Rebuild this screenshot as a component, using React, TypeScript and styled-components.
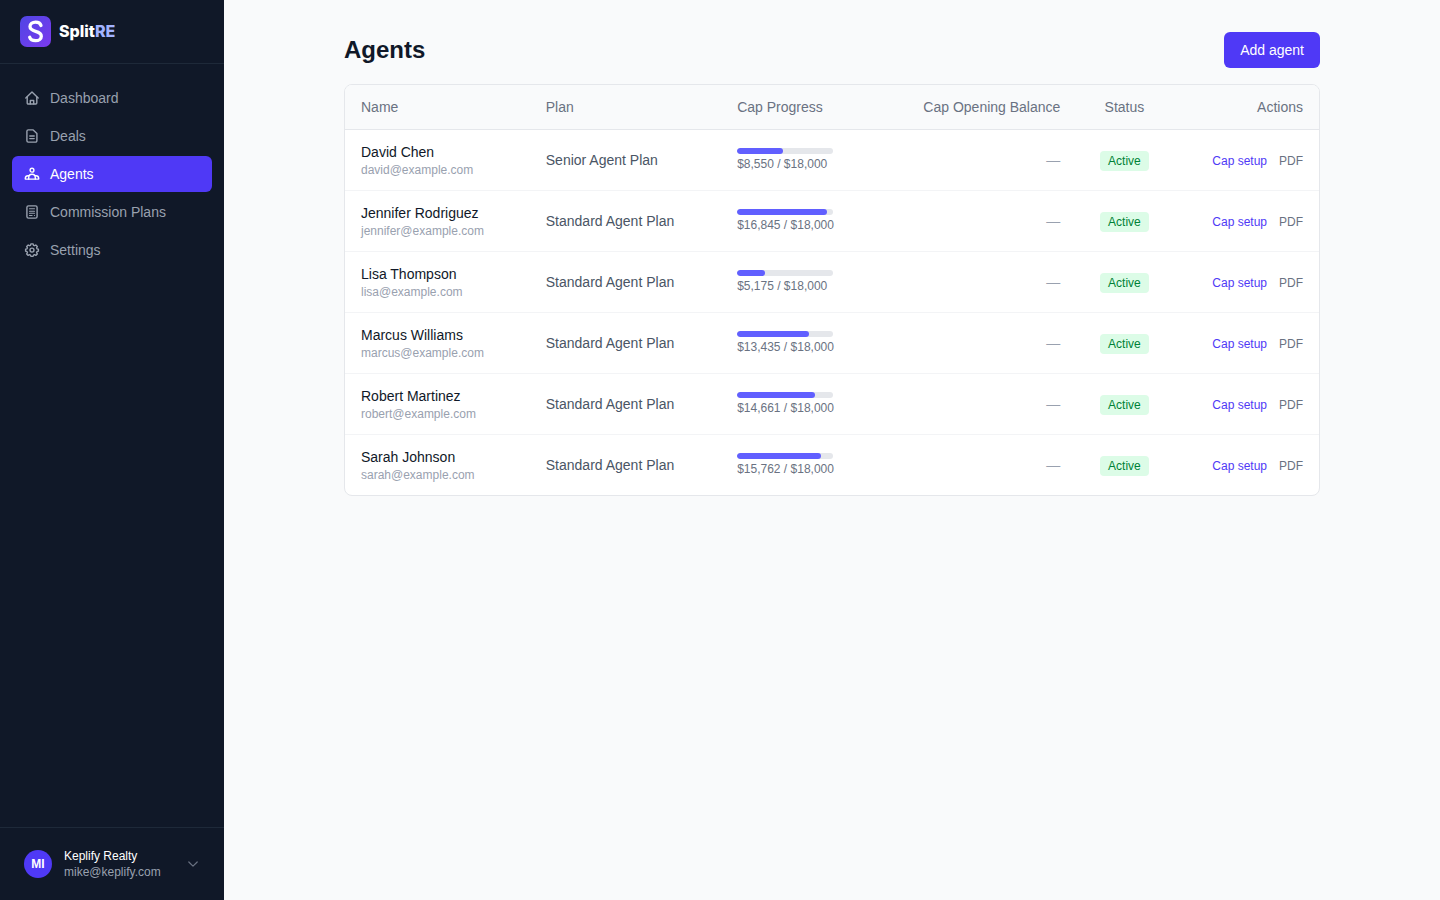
import React from 'react';
import styled, { createGlobalStyle } from 'styled-components';

const GlobalStyle = createGlobalStyle`
  *, *::before, *::after { box-sizing: border-box; }
  body {
    margin: 0;
    background: #f9fafb;
    color: #101828;
    font-family: "Liberation Sans", Arial, Helvetica, sans-serif;
    font-size: 14px;
    line-height: 20px;
  }
  button { font: inherit; border: 0; cursor: pointer; }
  a { text-decoration: none; }
`;

const Shell = styled.div`
  display: flex;
  min-height: 100vh;
`;

const Sidebar = styled.aside`
  display: flex;
  flex-direction: column;
  flex: none;
  width: 224px;
  background: #101828;
`;

const Brand = styled.a`
  display: flex;
  align-items: center;
  gap: 8px;
  padding: 16px 20px;
  border-bottom: 1px solid #1e2939;
  color: #ffffff;
`;

const Wordmark = styled.span`
  padding-bottom: 2px;
  font-family: Inter, sans-serif;
  font-size: 16px;
  font-weight: 800;
`;

const WordmarkAccent = styled.span`
  color: #a3b3ff;
`;

const Nav = styled.nav`
  display: flex;
  flex-direction: column;
  flex: 1;
  gap: 2px;
  padding: 16px 12px;
`;

const NavLink = styled.a<{ $active?: boolean }>`
  display: flex;
  align-items: center;
  gap: 10px;
  padding: 8px 12px;
  border-radius: 6px;
  background: ${(p) => (p.$active ? '#4f39f6' : 'transparent')};
  color: ${(p) => (p.$active ? '#ffffff' : '#99a1af')};
`;

const Icon = styled.svg<{ $weight?: number }>`
  flex: none;
  display: block;
  fill: none;
  stroke: currentColor;
  stroke-width: ${(p) => p.$weight ?? 1.4};
  stroke-linecap: round;
  stroke-linejoin: round;
`;

const AccountArea = styled.div`
  padding: 12px;
  border-top: 1px solid #1e2939;
`;

const AccountButton = styled.button`
  display: flex;
  align-items: center;
  gap: 12px;
  width: 100%;
  padding: 8px 12px;
  border-radius: 6px;
  background: transparent;
  color: #6a7282;
  text-align: left;
`;

const Avatar = styled.span`
  display: flex;
  align-items: center;
  justify-content: center;
  width: 28px;
  height: 28px;
  border-radius: 50%;
  background: #4f39f6;
  color: #ffffff;
  font-size: 12px;
  font-weight: 700;
  line-height: 16px;
`;

const AccountText = styled.span`
  display: flex;
  flex-direction: column;
  flex: 1;
  font-size: 12px;
  line-height: 16px;
`;

const AccountName = styled.span`
  color: #ffffff;
`;

const AccountEmail = styled.span`
  color: #99a1af;
`;

const Main = styled.main`
  flex: 1;
  min-width: 0;
`;

const Content = styled.div`
  max-width: 1024px;
  margin: 0 auto;
  padding: 32px 24px;
`;

const PageHeader = styled.header`
  display: flex;
  align-items: center;
  justify-content: space-between;
  margin-bottom: 16px;
`;

const Title = styled.h1`
  margin: 0;
  font-size: 24px;
  font-weight: 700;
  line-height: 32px;
`;

const PrimaryButton = styled.button`
  padding: 8px 16px;
  border-radius: 6px;
  background: #4f39f6;
  color: #ffffff;
`;

const Card = styled.section`
  overflow: hidden;
  border: 1px solid #e5e7eb;
  border-radius: 8px;
  background: #ffffff;
`;

const Table = styled.table`
  width: 100%;
  border-collapse: collapse;
`;

type Align = 'left' | 'center' | 'right';

const HeadCell = styled.th<{ $align?: Align }>`
  padding: 12px 16px;
  border-bottom: 1px solid #e5e7eb;
  background: #f9fafb;
  color: #6a7282;
  font-weight: 400;
  text-align: ${(p) => p.$align ?? 'left'};
`;

const Row = styled.tr`
  & + & { border-top: 1px solid #f3f4f6; }
`;

const Cell = styled.td<{ $align?: Align }>`
  padding: 12px 16px;
  color: #4a5565;
  text-align: ${(p) => p.$align ?? 'left'};
`;

const AgentName = styled.div`
  color: #101828;
`;

const AgentEmail = styled.div`
  color: #99a1af;
  font-size: 12px;
  line-height: 16px;
`;

const Track = styled.div`
  overflow: hidden;
  width: 96px;
  height: 6px;
  margin-bottom: 2px;
  border-radius: 3px;
  background: #e5e7eb;
`;

const Fill = styled.div`
  height: 100%;
  border-radius: 3px;
  background: #615fff;
`;

const CapText = styled.div`
  color: #6a7282;
  font-size: 12px;
  line-height: 16px;
`;

const Empty = styled.span`
  color: #99a1af;
`;

const Badge = styled.span`
  display: inline-block;
  padding: 2px 8px;
  border-radius: 4px;
  background: #dcfce7;
  color: #008236;
  font-size: 12px;
  line-height: 16px;
`;

const ActionCell = styled(Cell)`
  white-space: nowrap;
`;

const ActionLink = styled.a<{ $muted?: boolean }>`
  color: ${(p) => (p.$muted ? '#6a7282' : '#4f39f6')};
  font-size: 12px;
  line-height: 16px;

  & + & { margin-left: 12px; }
`;

const CAP = 18000;

const agents = [
  { name: 'David Chen', email: 'david@example.com', plan: 'Senior Agent Plan', used: 8550 },
  { name: 'Jennifer Rodriguez', email: 'jennifer@example.com', plan: 'Standard Agent Plan', used: 16845 },
  { name: 'Lisa Thompson', email: 'lisa@example.com', plan: 'Standard Agent Plan', used: 5175 },
  { name: 'Marcus Williams', email: 'marcus@example.com', plan: 'Standard Agent Plan', used: 13435 },
  { name: 'Robert Martinez', email: 'robert@example.com', plan: 'Standard Agent Plan', used: 14661 },
  { name: 'Sarah Johnson', email: 'sarah@example.com', plan: 'Standard Agent Plan', used: 15762 },
];

const money = (n: number) => `$${n.toLocaleString('en-US')}`;

const navItems = [
  {
    label: 'Dashboard',
    icon: (
      <>
        <path d="M1.800 7.900 8 1.900l6.200 6" />
        <path d="M3.200 7v6a1 1 0 0 0 1 1h7.600a1 1 0 0 0 1-1V7" />
        <path d="M6.300 13.900v-3.400h3.400v3.400" />
      </>
    ),
  },
  {
    label: 'Deals',
    icon: (
      <>
        <path d="M4.300 1.900h4.900l3.700 3.700v7.100a1.400 1.400 0 0 1-1.400 1.400H4.300a1.400 1.400 0 0 1-1.400-1.400V3.300a1.400 1.400 0 0 1 1.400-1.400z" />
        <path d="M5.800 8h4.400M5.800 10.600h4.400" />
      </>
    ),
  },
  {
    label: 'Agents',
    active: true,
    icon: (
      <>
        <circle cx="8" cy="4.200" r="1.900" />
        <path d="M4.700 13.100v-1.600a3.300 3.300 0 0 1 6.600 0v1.600" />
        <path d="M4.700 9.800H4a2.700 2.700 0 0 0-2.700 2.500v.8h13.400v-.8A2.700 2.700 0 0 0 12 9.800h-.7" />
      </>
    ),
  },
  {
    label: 'Commission Plans',
    icon: (
      <>
        <rect x="2.900" y="1.900" width="10.200" height="12.200" rx="1.600" />
        <path strokeWidth="1.100" d="M5.500 4.800h5M5.500 7.200h5M5.500 9.200h5M5.500 11.500h2.600M10.400 11.500h.1" />
      </>
    ),
  },
  {
    label: 'Settings',
    icon: (
      <>
        <path d="M6.900 1.900h2.200l.4 1.400 1 .4 1.300-.7 1.500 1.500-.7 1.300.4 1 1.400.4v2l-1.400.4-.4 1 .7 1.300-1.500 1.500-1.300-.7-1 .4-.4 1.300H6.900l-.4-1.300-1-.4-1.300.7-1.500-1.500.7-1.300-.4-1-1.400-.4v-2l1.400-.4.4-1-.7-1.300 1.500-1.500 1.300.7 1-.4z" />
        <circle cx="8" cy="8.100" r="2" />
      </>
    ),
  },
];

function Logo() {
  return (
    <svg width="31" height="31" viewBox="0 0 31 31" aria-hidden="true">
      <defs>
        <linearGradient id="brand" x1="0" y1="0" x2="1" y2="1">
          <stop offset="0" stopColor="#4f46e5" />
          <stop offset="1" stopColor="#7c3aed" />
        </linearGradient>
      </defs>
      <rect width="31" height="31" rx="7" fill="url(#brand)" />
      <path
        d="M21 9.500C20.300 7.300 18.300 6.200 15.600 6.200c-3.200 0-5.600 1.700-5.600 4.400 0 2.900 2.500 3.900 5.600 4.700 3.200.8 5.700 1.900 5.700 4.900 0 2.700-2.400 4.500-5.700 4.500-3 0-5.200-1.200-5.900-3.400"
        fill="none"
        stroke="#ffffff"
        strokeWidth="3.300"
        strokeLinecap="round"
      />
    </svg>
  );
}

export default function App() {
  return (
    <>
      <GlobalStyle />
      <Shell>
        <Sidebar>
          <Brand href="#">
            <Logo />
            <Wordmark>
              Split<WordmarkAccent>RE</WordmarkAccent>
            </Wordmark>
          </Brand>
          <Nav aria-label="Main">
            {navItems.map((item) => (
              <NavLink
                key={item.label}
                href="#"
                $active={item.active}
                aria-current={item.active ? 'page' : undefined}
              >
                <Icon width="16" height="16" viewBox="0 0 16 16" aria-hidden="true">
                  {item.icon}
                </Icon>
                {item.label}
              </NavLink>
            ))}
          </Nav>
          <AccountArea>
            <AccountButton type="button" aria-haspopup="menu">
              <Avatar>MI</Avatar>
              <AccountText>
                <AccountName>Keplify Realty</AccountName>
                <AccountEmail>mike@keplify.com</AccountEmail>
              </AccountText>
              <Icon $weight={1.2} width="14" height="14" viewBox="0 0 14 14" aria-hidden="true">
                <path d="M2.800 5 7 9.200 11.200 5" />
              </Icon>
            </AccountButton>
          </AccountArea>
        </Sidebar>
        <Main>
          <Content>
            <PageHeader>
              <Title>Agents</Title>
              <PrimaryButton type="button">Add agent</PrimaryButton>
            </PageHeader>
            <Card aria-label="Agents">
              <Table>
                <thead>
                  <tr>
                    <HeadCell scope="col">Name</HeadCell>
                    <HeadCell scope="col">Plan</HeadCell>
                    <HeadCell scope="col">Cap Progress</HeadCell>
                    <HeadCell scope="col" $align="right">Cap Opening Balance</HeadCell>
                    <HeadCell scope="col" $align="center">Status</HeadCell>
                    <HeadCell scope="col" $align="right">Actions</HeadCell>
                  </tr>
                </thead>
                <tbody>
                  {agents.map((agent) => (
                    <Row key={agent.email}>
                      <Cell>
                        <AgentName>{agent.name}</AgentName>
                        <AgentEmail>{agent.email}</AgentEmail>
                      </Cell>
                      <Cell>{agent.plan}</Cell>
                      <Cell>
                        <Track>
                          <Fill style={{ width: `${(agent.used / CAP) * 100}%` }} />
                        </Track>
                        <CapText>
                          {money(agent.used)} / {money(CAP)}
                        </CapText>
                      </Cell>
                      <Cell $align="right">
                        <Empty>—</Empty>
                      </Cell>
                      <Cell $align="center">
                        <Badge>Active</Badge>
                      </Cell>
                      <ActionCell $align="right">
                        <ActionLink href="#">Cap setup</ActionLink>
                        <ActionLink href="#" $muted>PDF</ActionLink>
                      </ActionCell>
                    </Row>
                  ))}
                </tbody>
              </Table>
            </Card>
          </Content>
        </Main>
      </Shell>
    </>
  );
}
